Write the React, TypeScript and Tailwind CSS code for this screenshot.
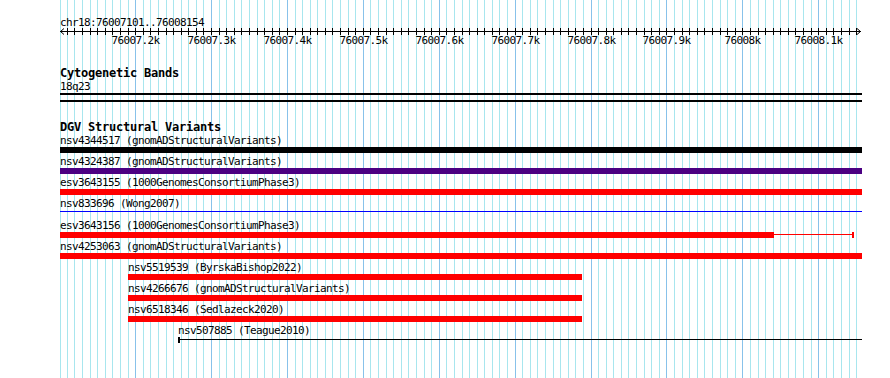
import React from 'react';

// track panel spans x 60..861, 0.759 px per bp; grid every 10 bp
const LEFT = 60;
const gridXs = Array.from({ length: 106 }, (_, k) => Math.max(LEFT, Math.round(59.24 + 7.59 * k)));

const MONO = "font-['DejaVu_Sans_Mono',monospace]";
const SMALL = 'text-[11px] leading-[11px] h-[11px] tracking-[-0.6226px] whitespace-nowrap';
const BOLD = 'text-[12px] leading-[13px] h-[13px] font-bold tracking-[-0.2246px] whitespace-nowrap';

const rulerLabels = [
  '76007.2k', '76007.3k', '76007.4k', '76007.5k', '76007.6k',
  '76007.7k', '76007.8k', '76007.9k', '76008k', '76008.1k',
];

type Row = {
  label: string;
  start: number;
  kind: 'bar' | 'line' | 'partial' | 'tail';
  width?: number;
  color?: string;
};

const rows: Row[] = [
  { label: 'nsv4344517 (gnomADStructuralVariants)', start: 60, kind: 'bar', width: 802, color: 'bg-black' },
  { label: 'nsv4324387 (gnomADStructuralVariants)', start: 60, kind: 'bar', width: 802, color: 'bg-[#4b0082]' },
  { label: 'esv3643155 (1000GenomesConsortiumPhase3)', start: 60, kind: 'bar', width: 802, color: 'bg-[#ff0000]' },
  { label: 'nsv833696 (Wong2007)', start: 60, kind: 'line', width: 802, color: 'bg-[#0000ff]' },
  { label: 'esv3643156 (1000GenomesConsortiumPhase3)', start: 60, kind: 'partial' },
  { label: 'nsv4253063 (gnomADStructuralVariants)', start: 60, kind: 'bar', width: 802, color: 'bg-[#ff0000]' },
  { label: 'nsv5519539 (ByrskaBishop2022)', start: 128, kind: 'bar', width: 454, color: 'bg-[#ff0000]' },
  { label: 'nsv4266676 (gnomADStructuralVariants)', start: 128, kind: 'bar', width: 454, color: 'bg-[#ff0000]' },
  { label: 'nsv6518346 (Sedlazeck2020)', start: 128, kind: 'bar', width: 454, color: 'bg-[#ff0000]' },
  { label: 'nsv507885 (Teague2010)', start: 178, kind: 'tail' },
];

function GridLines() {
  return (
    <svg className="absolute inset-0 block" width={890} height={378} shapeRendering="crispEdges">
      {gridXs.map((x, k) => (
        <line
          key={k}
          x1={x + 0.5}
          x2={x + 0.5}
          y1={0}
          y2={378}
          stroke={k > 0 && k % 10 === 0 ? '#88c2ea' : '#a8e6ee'}
          strokeWidth={1}
        />
      ))}
    </svg>
  );
}

function Ruler() {
  return (
    <svg className="block" width={802} height={7} shapeRendering="crispEdges">
      <line x1={0} x2={801} y1={3.5} y2={3.5} stroke="#000" />
      {gridXs.slice(1).map((x, i) => (
        <line key={i} x1={x - LEFT + 0.5} x2={x - LEFT + 0.5} y1={0} y2={7} stroke="#000" />
      ))}
      <path d="M4 0.5 L0.5 3.5 L4 6.5" fill="none" stroke="#000" shapeRendering="auto" />
      <path d="M797 0.5 L800.5 3.5 L797 6.5" fill="none" stroke="#000" shapeRendering="auto" />
    </svg>
  );
}

function Track({ row }: { row: Row }) {
  if (row.kind === 'bar') {
    return <div className={`h-[6px] ${row.color}`} style={{ width: row.width }} />;
  }
  if (row.kind === 'line') {
    return (
      <div className="h-[6px]">
        <div className={`mt-[2px] h-px ${row.color}`} style={{ width: row.width }} />
      </div>
    );
  }
  if (row.kind === 'partial') {
    return (
      <div className="flex h-[6px]">
        <div className="h-[6px] w-[714px] bg-[#ff0000]" />
        <div className="mt-[2px] h-px w-[78px] bg-[#ff0000]" />
        <div className="h-[6px] w-[2px] bg-[#ff0000]" />
      </div>
    );
  }
  return (
    <div className="flex h-[6px]">
      <div className="h-[6px] w-[2px] bg-black" />
      <div className="mt-[2px] h-px w-[682px] bg-black" />
    </div>
  );
}

export default function App() {
  return (
    <div className="relative w-[890px] h-[378px] overflow-hidden bg-white text-black">
      <GridLines />
      <div className={`relative pl-[60px] pt-[17px] ${MONO}`}>
        <div className="w-[802px]">
          {/* Ruler */}
          <div className={SMALL}>chr18:76007101..76008154</div>
          <Ruler />
          <div className={`relative ${SMALL}`}>
            {rulerLabels.map((t, i) => {
              const x = gridXs[(i + 1) * 10] - LEFT;
              return (
                <span key={t} className="absolute top-0" style={{ left: x - t.length * 3 + 0.5 }}>
                  {t}
                </span>
              );
            })}
          </div>

          {/* Cytogenetic Bands */}
          <div className={`mt-[21px] ${BOLD}`}>Cytogenetic Bands</div>
          <div className={`mt-[1px] ${SMALL}`}>18q23</div>
          <div className="mt-[1px] h-[2px] bg-black" />
          <div className="mt-[5px] h-[2px] bg-black" />

          {/* DGV Structural Variants */}
          <div className={`mt-[19px] ${BOLD}`}>DGV Structural Variants</div>
          <div className="mt-[1px] flex flex-col">
            {rows.map((row) => (
              <div key={row.label} className="mb-[3px]" style={{ marginLeft: row.start - LEFT }}>
                <div className={SMALL}>{row.label}</div>
                <div className="mt-[1px]">
                  <Track row={row} />
                </div>
              </div>
            ))}
          </div>
        </div>
      </div>
    </div>
  );
}
